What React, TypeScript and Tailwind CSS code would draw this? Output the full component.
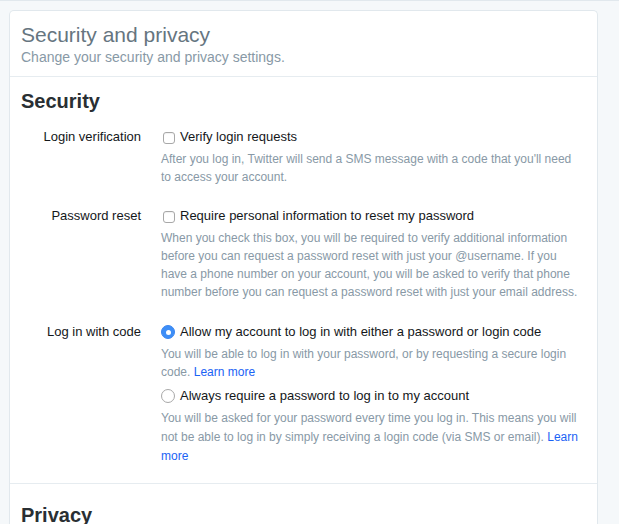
import { useState } from 'react';

const font = { fontFamily: '"Liberation Sans", Arial, sans-serif' };

function Checkbox({ checked, onChange }: { checked: boolean; onChange: () => void }) {
  return (
    <button
      type="button"
      onClick={onChange}
      className="mt-[1px] ml-[2px] mr-[5px] h-[12px] w-[12px] shrink-0 rounded-[3px] border border-[#a8a8a8] bg-white shadow-[inset_0_1px_1px_rgba(0,0,0,0.06)]"
      aria-checked={checked}
      role="checkbox"
    />
  );
}

function Radio({ checked, onChange }: { checked: boolean; onChange: () => void }) {
  return (
    <button
      type="button"
      onClick={onChange}
      role="radio"
      aria-checked={checked}
      className={`mr-[5px] flex h-[14px] w-[14px] shrink-0 items-center justify-center rounded-full border ${
        checked ? 'border-[#3a86f0] bg-[#3d8ef7]' : 'border-[#a8a8a8] bg-white'
      }`}
    >
      {checked && <span className="h-[5px] w-[5px] rounded-full bg-white" />}
    </button>
  );
}

function Row({ label, className = '', children }: { label: string; className?: string; children: React.ReactNode }) {
  return (
    <div className={`flex ${className}`}>
      <div className="w-[120px] shrink-0 text-right text-[13px] leading-[18px] text-[#14171a]">{label}</div>
      <div className="ml-[20px] w-[420px]">{children}</div>
    </div>
  );
}

export default function App() {
  const [verify, setVerify] = useState(false);
  const [reset, setReset] = useState(false);
  const [code, setCode] = useState<'allow' | 'always'>('allow');

  return (
    <div className="min-h-screen border-t border-[#e1e8ed] bg-[#f5f8fa] pt-[9px] pl-[9px]" style={font}>
      <div className="w-[589px] rounded-t-[5px] border border-b-0 border-[#e1e8ed] bg-white">
        <div className="border-b border-[#e6ecf0] px-[11px] pt-[12px] pb-[9px]">
          <h1 className="text-[21px] leading-[24px] text-[#66757f]">Security and privacy</h1>
          <p className="text-[14px] leading-[20px] text-[#8899a6]">Change your security and privacy settings.</p>
        </div>

        <div className="border-b border-[#e6ecf0] px-[11px] pt-[12px] pb-[17px]">
          <h2 className="text-[20px] font-bold leading-[24px] text-[#292f33]">Security</h2>

          <div className="mt-[15px] flex flex-col gap-[21px]">
            <Row label="Login verification">
              <label className="flex items-center text-[13px] leading-[18px] text-[#14171a]">
                <Checkbox checked={verify} onChange={() => setVerify(!verify)} />
                Verify login requests
              </label>
              <p className="mt-[4px] text-[12px] leading-[18px] text-[#8899a6]">
                After you log in, Twitter will send a SMS message with a code that you'll need to access your account.
              </p>
            </Row>

            <Row label="Password reset">
              <label className="flex items-center text-[13px] leading-[18px] text-[#14171a]">
                <Checkbox checked={reset} onChange={() => setReset(!reset)} />
                Require personal information to reset my password
              </label>
              <p className="mt-[4px] text-[12px] leading-[18px] text-[#8899a6]">
                When you check this box, you will be required to verify additional information before you can request a
                password reset with just your @username. If you have a phone number on your account, you will be asked to
                verify that phone number before you can request a password reset with just your email address.
              </p>
            </Row>

            <Row label="Log in with code" className="mt-[1px]">
              <label className="flex items-center text-[13px] leading-[18px] text-[#14171a]">
                <Radio checked={code === 'allow'} onChange={() => setCode('allow')} />
                Allow my account to log in with either a password or login code
              </label>
              <p className="mt-[4px] text-[12px] leading-[18px] text-[#8899a6]">
                You will be able to log in with your password, or by requesting a secure login code.{' '}
                <a href="#" className="text-[#1b63f5]">Learn more</a>
              </p>
              <label className="mt-[6px] flex items-center text-[13px] leading-[18px] text-[#14171a]">
                <Radio checked={code === 'always'} onChange={() => setCode('always')} />
                Always require a password to log in to my account
              </label>
              <p className="mt-[4px] text-[12px] leading-[19px] text-[#8899a6]">
                You will be asked for your password every time you log in. This means you will not be able to log in by
                simply receiving a login code (via SMS or email).{' '}
                <a href="#" className="text-[#1b63f5]">Learn more</a>
              </p>
            </Row>
          </div>
        </div>

        <div className="px-[11px] pt-[19px]">
          <h2 className="text-[20px] font-bold leading-[24px] text-[#292f33]">Privacy</h2>
        </div>
      </div>
    </div>
  );
}
